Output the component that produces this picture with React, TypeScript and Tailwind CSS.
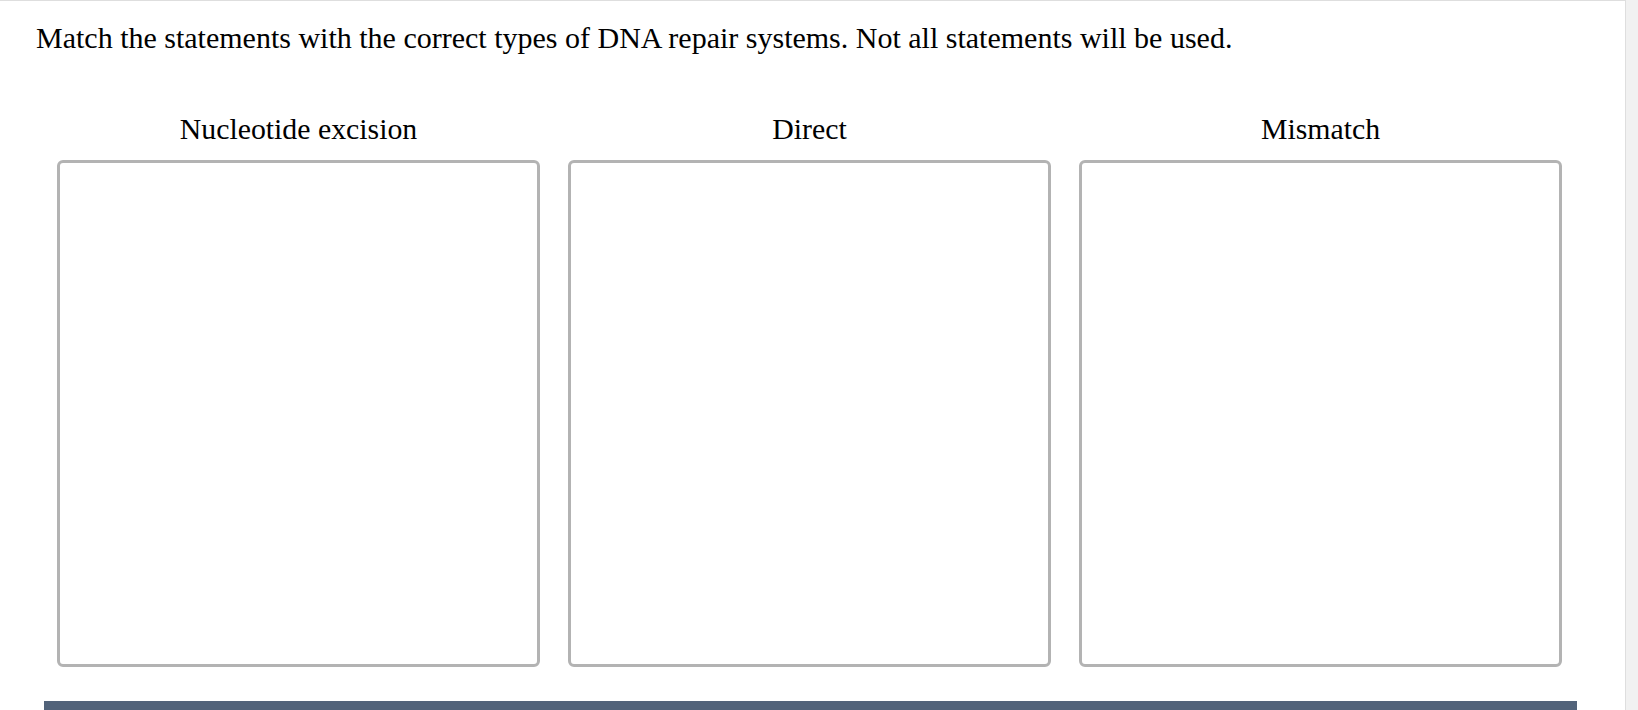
import React from "react";

const categories = ["Nucleotide excision", "Direct", "Mismatch"];

function DropZone({ label }: { label: string }) {
  return (
    <div className="flex flex-col">
      <div className="h-[34px] text-center text-[29.8px] leading-[34px]">{label}</div>
      <div className="mt-[14px] h-[507px] rounded-[6px] border-[3px] border-[#b3b3b3] bg-white" />
    </div>
  );
}

export default function App() {
  return (
    <div
      className="flex h-[710px] w-[1638px] overflow-hidden bg-white text-black"
      style={{ fontFamily: '"Liberation Serif", "Times New Roman", serif' }}
    >
      <main className="flex w-[1626px] flex-col border-t border-r border-[#dedede]">
        <p className="pl-[36px] pt-[20px] text-[30px] leading-[34px]">
          Match the statements with the correct types of DNA repair systems. Not all statements will be
          used.
        </p>
        <section className="ml-[44px] mt-[57px] w-[1533px]">
          <div className="grid grid-cols-3 gap-[28px] pl-[13px] pr-[15px]">
            {categories.map((c) => (
              <DropZone key={c} label={c} />
            ))}
          </div>
          <div className="mt-[34px] h-[20px] bg-[#52637a]" />
        </section>
      </main>
      <div className="w-[12px] bg-[#f1f1f1]" />
    </div>
  );
}
